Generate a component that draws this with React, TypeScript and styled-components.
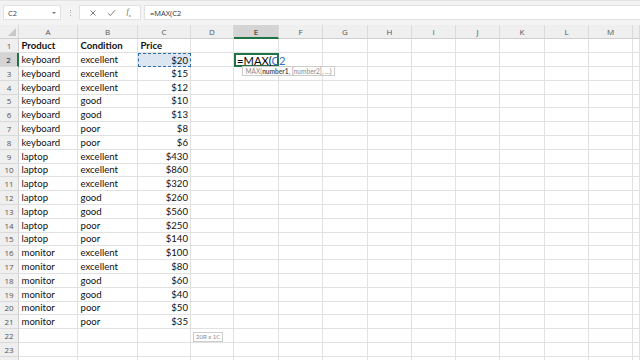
import React from "react";
import styled, { createGlobalStyle, css } from "styled-components";

const GlobalStyle = createGlobalStyle`
  html, body {
    margin: 0;
    padding: 0;
    background: #ffffff;
    overflow: hidden;
  }
  body {
    font-family: "Lato", "Open Sans", sans-serif;
    width: 640px;
    height: 360px;
  }
`

const Page = styled.div`
  width: 640px;
  height: 360px;
  display: flex;
  flex-direction: column;
  overflow: hidden;
  background: #ffffff;
`

const FormulaBar = styled.div`
  height: 25px;
  flex: 0 0 25px;
  background: #f3f3f3;
  display: flex;
  align-items: center;
  padding: 0 0 1px 3px;
  box-sizing: border-box;
  border-top: 1px solid #e4e4e4;
`

const NameBox = styled.div`
  width: 58px;
  height: 15px;
  background: #ffffff;
  border: 1px solid #e2e2e2;
  display: flex;
  align-items: center;
  justify-content: space-between;
  padding: 0 4px 0 4px;
  box-sizing: border-box;
  font-family: "Open Sans", sans-serif;
  font-size: 7.5px;
  color: #444;
`

const Caret = styled.span`
  width: 0;
  height: 0;
  border-left: 2.5px solid transparent;
  border-right: 2.5px solid transparent;
  border-top: 2.5px solid #777;
`

const Dots = styled.div`
  width: 18px;
  display: flex;
  flex-direction: column;
  align-items: center;
  gap: 1.5px;

  span {
    width: 1px;
    height: 1px;
    background: #aaa;
  }
`

const IconGroup = styled.div`
  width: 62px;
  height: 15px;
  background: #ffffff;
  border: 1px solid #e2e2e2;
  box-sizing: border-box;
  display: flex;
  align-items: center;
  justify-content: space-around;
  padding: 0 4px;
  color: #777;
`

const Fx = styled.span`
  font-family: "Liberation Serif", serif;
  font-style: italic;
  font-size: 8px;
  color: #666;

  sub {
    font-size: 5px;
  }
`

const FormulaInput = styled.div`
  flex: 1;
  height: 15px;
  margin-left: 3px;
  background: #ffffff;
  border: 1px solid #e2e2e2;
  border-right: none;
  box-sizing: border-box;
  display: flex;
  align-items: center;
  padding-left: 5px;
  font-family: "Open Sans", sans-serif;
  font-size: 7.5px;
  color: #333;
`

const Sheet = styled.div`
  display: grid;
  grid-template-columns: 19px 59px 60px 53px 43px 45px 44px 45px 44px 44px 44px 45px 44px 44px 1fr;
  grid-template-rows: 14.4px repeat(24, 13.8px);
  background: #ffffff;
`

const HeaderCell = styled.div<{ $active?: boolean }>`
  background: #efefef;
  border-right: 1px solid #dadada;
  border-bottom: 1px solid #cfcfcf;
  box-sizing: border-box;
  display: flex;
  align-items: center;
  justify-content: center;
  font-family: "Open Sans", sans-serif;
  font-size: 8px;
  color: #555;
  ${(p) =>
    p.$active &&
    css`
      background: #d4d4d4;
      border-bottom: 2px solid #217346;
      color: #222;
    `}
`

const Corner = styled(HeaderCell)`
  position: relative;

  &::after {
    content: "";
    position: absolute;
    right: 2px;
    bottom: 2px;
    width: 0;
    height: 0;
    border-left: 8px solid transparent;
    border-bottom: 8px solid #c8c8c8;
  }
`

const RowHeader = styled.div<{ $active?: boolean }>`
  background: #efefef;
  border-right: 1px solid #cfcfcf;
  border-bottom: 1px solid #dadada;
  box-sizing: border-box;
  display: flex;
  align-items: center;
  justify-content: center;
  font-family: "Open Sans", sans-serif;
  font-size: 8px;
  color: #555;
  ${(p) =>
    p.$active &&
    css`
      background: #d4d4d4;
      border-right: 2px solid #217346;
      color: #222;
    `}
`

const Cell = styled.div<{ $align?: "left" | "right"; $bold?: boolean }>`
  position: relative;
  border-right: 1px solid #e1e1e1;
  border-bottom: 1px solid #e1e1e1;
  box-sizing: border-box;
  display: flex;
  align-items: center;
  justify-content: ${(p) => (p.$align === "right" ? "flex-end" : "flex-start")};
  padding: 0 2px 0 2.5px;
  font-size: 9.6px;
  font-weight: ${(p) => (p.$bold ? 700 : 400)};
  color: #111;
  white-space: nowrap;
`

const RefCell = styled(Cell)`
  background: #dce6f3;
  border: 1.5px dashed #2f6ea8;
`

const EditCell = styled(Cell)`
  border: 2px solid #217346;
  overflow: visible;
  padding-left: 1px;
  font-size: 11.2px;
  color: #000;
  z-index: 3;
`

const RefText = styled.span`
  color: #3b6fc4;
`

const ArgTip = styled.div`
  position: absolute;
  left: 6px;
  top: calc(100% + 1.5px);
  width: max-content;
  height: 10px;
  line-height: 8px;
  padding: 0 2.5px;
  background: #ffffff;
  border: 1px solid #cccccc;
  box-sizing: border-box;
  font-size: 6.6px;
  font-weight: 400;
  color: #8a8a8a;
  white-space: nowrap;

  b {
    color: #555;
    font-weight: 700;
  }
`

const SizeTip = styled.div`
  position: absolute;
  left: 2px;
  top: 2.5px;
  width: max-content;
  height: 10px;
  line-height: 8px;
  padding: 0 2px;
  background: #ffffff;
  border: 1px solid #cccccc;
  box-sizing: border-box;
  font-size: 6px;
  color: #8a8a8a;
  z-index: 2;
`

const columns = ["A", "B", "C", "D", "E", "F", "G", "H", "I", "J", "K", "L", "M", ""];

const data: [string, string, string][] = [
  ["Product", "Condition", "Price"],
  ["keyboard", "excellent", "$20"],
  ["keyboard", "excellent", "$15"],
  ["keyboard", "excellent", "$12"],
  ["keyboard", "good", "$10"],
  ["keyboard", "good", "$13"],
  ["keyboard", "poor", "$8"],
  ["keyboard", "poor", "$6"],
  ["laptop", "excellent", "$430"],
  ["laptop", "excellent", "$860"],
  ["laptop", "excellent", "$320"],
  ["laptop", "good", "$260"],
  ["laptop", "good", "$560"],
  ["laptop", "poor", "$250"],
  ["laptop", "poor", "$140"],
  ["monitor", "excellent", "$100"],
  ["monitor", "excellent", "$80"],
  ["monitor", "good", "$60"],
  ["monitor", "good", "$40"],
  ["monitor", "poor", "$50"],
  ["monitor", "poor", "$35"],
  ["", "", ""],
  ["", "", ""],
  ["", "", ""],
];

const CloseIcon = () => (
  <svg width="8" height="8" viewBox="0 0 8 8">
    <path d="M1.5 1.5 L6.5 6.5 M6.5 1.5 L1.5 6.5" stroke="#6f6f6f" strokeWidth="0.9" fill="none" />
  </svg>
)

const CheckIcon = () => (
  <svg width="9" height="8" viewBox="0 0 9 8">
    <path d="M1 4.3 L3.4 6.6 L8 1.2" stroke="#6f6f6f" strokeWidth="0.9" fill="none" />
  </svg>
)

const App = (): JSX.Element => {
  return (
    <Page>
      <GlobalStyle />
      <FormulaBar>
        <NameBox>
          C2
          <Caret />
        </NameBox>
        <Dots>
          <span />
          <span />
          <span />
        </Dots>
        <IconGroup>
          <CloseIcon />
          <CheckIcon />
          <Fx>
            f<sub>x</sub>
          </Fx>
        </IconGroup>
        <FormulaInput>=MAX(C2</FormulaInput>
      </FormulaBar>

      <Sheet>
        <Corner />
        {columns.map((c, i) => (
          <HeaderCell key={i} $active={c === "E"}>
            {c}
          </HeaderCell>
        ))}

        {data.map((row, r) => {
          const rowNum = r + 1;
          return (
            <React.Fragment key={rowNum}>
              {/* last row is mostly below the fold, its number isn't visible */}
              <RowHeader $active={rowNum === 2}>{rowNum < 24 ? rowNum : ""}</RowHeader>
              <Cell $bold={rowNum === 1}>{row[0]}</Cell>
              <Cell $bold={rowNum === 1}>{row[1]}</Cell>
              {rowNum === 2 ? (
                <RefCell $align="right">{row[2]}</RefCell>
              ) : (
                <Cell $bold={rowNum === 1} $align={rowNum === 1 ? "left" : "right"}>
                  {row[2]}
                </Cell>
              )}
              <Cell>{rowNum === 22 && <SizeTip>20R x 1C</SizeTip>}</Cell>
              {rowNum === 2 ? (
                <EditCell>
                  <span>
                    =MAX(<RefText>C2</RefText>
                  </span>
                  <ArgTip>
                    MAX(<b>number1</b>, [number2], ...)
                  </ArgTip>
                </EditCell>
              ) : (
                <Cell />
              )}
              {columns.slice(5).map((c, i) => (
                <Cell key={i} />
              ))}
            </React.Fragment>
          );
        })}
      </Sheet>
    </Page>
  )
}

export default App;
